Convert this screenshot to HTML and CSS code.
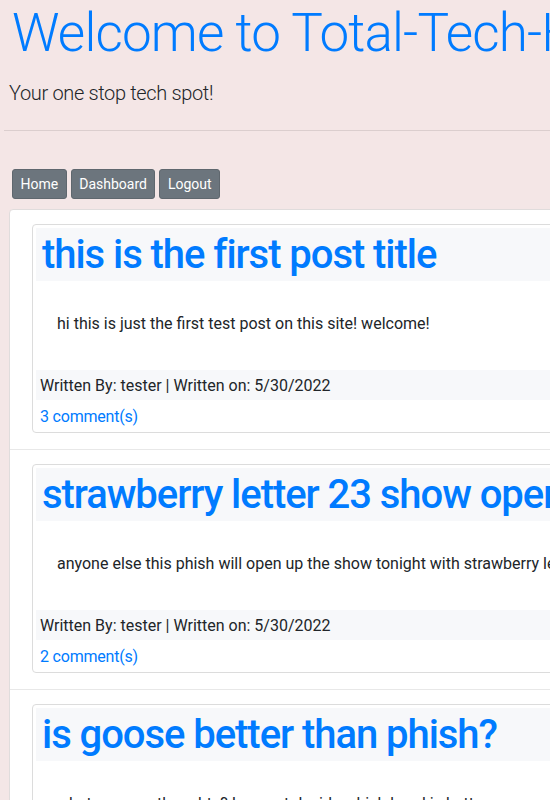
FILE: index.html
```html
<!DOCTYPE html>
<html lang="en">
<head>
<meta charset="utf-8">
<title>Total-Tech-Help</title>
<link rel="stylesheet" href="styles.css">
</head>
<body>
<div class="page">
  <header class="jumbo">
    <h1 class="display">Welcome to Total-Tech-Help!</h1>
    <p class="lead">Your one stop tech spot!</p>
    <hr class="rule">
  </header>
  <nav class="nav">
    <a class="btn" href="#">Home</a>
    <a class="btn" href="#">Dashboard</a>
    <a class="btn" href="#">Logout</a>
  </nav>
  <section class="feed">
    <div class="item">
      <article class="post">
        <div class="post-head"><h2 class="post-title">this is the first post title</h2></div>
        <div class="post-body"><p>hi this is just the first test post on this site! welcome!</p></div>
        <div class="post-foot">Written By: tester | Written on: 5/30/2022</div>
        <a class="comments" href="#">3 comment(s)</a>
      </article>
    </div>
    <div class="item">
      <article class="post">
        <div class="post-head"><h2 class="post-title">strawberry letter 23 show opener?</h2></div>
        <div class="post-body"><p>anyone else this phish will open up the show tonight with strawberry letter 23?</p></div>
        <div class="post-foot">Written By: tester | Written on: 5/30/2022</div>
        <a class="comments" href="#">2 comment(s)</a>
      </article>
    </div>
    <div class="item">
      <article class="post">
        <div class="post-head"><h2 class="post-title">is goose better than phish?</h2></div>
        <div class="post-body"><p>what are your thoughts? I cannot decide which band is better.</p></div>
        <div class="post-foot">Written By: tester | Written on: 5/30/2022</div>
        <a class="comments" href="#">1 comment(s)</a>
      </article>
    </div>
  </section>
</div>
</body>
</html>
```

FILE: styles.css
```css
html {
  overflow: hidden;
}
body {
  margin: 0;
  background: #f4e6e6;
  font-family: Roboto, "Liberation Sans", sans-serif;
  color: #212529;
}
.page {
  width: 1100px;
}
.display {
  margin: 0;
  padding-left: 12px;
  font-size: 53px;
  line-height: 67px;
  font-weight: 300;
  letter-spacing: -0.85px;
  color: #007bff;
}
.lead {
  margin: 11px 0 0;
  padding-left: 9px;
  font-size: 20px;
  line-height: 30px;
  font-weight: 300;
  letter-spacing: -0.35px;
}
.rule {
  margin: 22px 0 0 4px;
  border: 0;
  border-top: 1px solid rgba(0, 0, 0, 0.1);
}
.nav {
  display: flex;
  gap: 4px;
  margin: 38px 0 0 12px;
}
.btn {
  display: block;
  padding: 4px 7.5px;
  font-size: 14px;
  line-height: 20px;
  color: #fff;
  text-decoration: none;
  background: #6c757d;
  border: 1px solid #5f676e;
  border-radius: 3px;
}
.feed {
  margin: 10px 0 0 9px;
  background: #fff;
  border: 1px solid #e0dcdc;
  border-radius: 4px;
}
.item {
  padding: 14px 0 16px 22px;
}
.item + .item {
  border-top: 1px solid #e8e8e8;
}
.post {
  padding: 3px 0 0 3px;
  border: 1px solid #dcdcdc;
  border-radius: 4px;
}
.post-head {
  padding: 3px 6px 2px;
  background: #f7f8fa;
}
.post-title {
  margin: 0;
  font-size: 40px;
  line-height: 48px;
  font-weight: 500;
  letter-spacing: -1.05px;
  color: #007bff;
  white-space: nowrap;
}
.post-body {
  padding: 31px 21px 34px;
}
.post-body p {
  margin: 0;
  font-size: 16px;
  line-height: 24px;
  white-space: nowrap;
}
.post-foot {
  padding: 4px 4px 2px;
  font-size: 16px;
  line-height: 24px;
  background: #f7f8fa;
}
.comments {
  display: block;
  padding: 5px 4px 3px;
  font-size: 16px;
  line-height: 24px;
  letter-spacing: -0.2px;
  color: #007bff;
  text-decoration: none;
}
```
